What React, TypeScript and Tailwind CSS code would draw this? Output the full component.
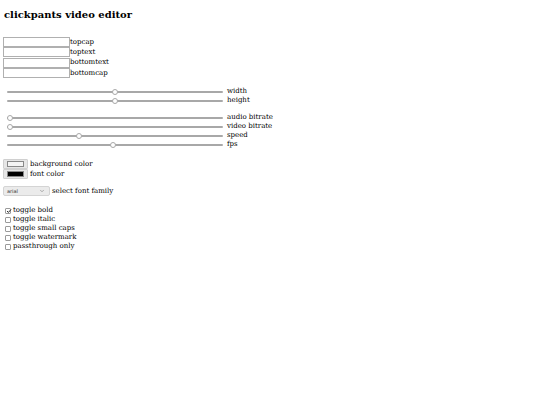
import { ChevronDown } from "lucide-react";

const textFields = ["topcap", "toptext", "bottomtext", "bottomcap"];

const sizeSliders = [
  { label: "width", value: 50 },
  { label: "height", value: 50 },
];

const mediaSliders = [
  { label: "audio bitrate", value: 0 },
  { label: "video bitrate", value: 0 },
  { label: "speed", value: 33 },
  { label: "fps", value: 49 },
];

const toggles = [
  { label: "toggle bold", checked: true },
  { label: "toggle italic", checked: false },
  { label: "toggle small caps", checked: false },
  { label: "toggle watermark", checked: false },
  { label: "passthrough only", checked: false },
];

function Slider({ label, value }: { label: string; value: number }) {
  return (
    <div className="flex h-[9px] items-center">
      <div className="relative ml-[7px] h-[9px] w-[216px]">
        <div className="absolute left-0 right-0 top-[3.5px] h-[2px] rounded-full bg-[#a8a8a8]" />
        <div
          className="absolute top-[1.5px] h-[6px] w-[6px] rounded-full border border-[#a8a8a8] bg-white"
          style={{ left: `calc(${value}% - ${(value / 100) * 6}px)` }}
        />
      </div>
      <span className="ml-[4px]">{label}</span>
    </div>
  );
}

function ColorRow({ label, swatch }: { label: string; swatch: string }) {
  return (
    <div className="flex h-[10px] items-center">
      <div className="ml-[3px] flex h-[10px] w-[25px] items-center justify-center rounded-[1px] border border-[#d0d0d0] bg-[#e6e6e6]">
        <div className={`h-[6px] w-[17px] border border-[#888] ${swatch}`} />
      </div>
      <span className="ml-[2px]">{label}</span>
    </div>
  );
}

export default function App() {
  return (
    <div className="min-h-[405px] w-[540px] bg-white text-[7px] leading-[9px] text-black font-['DejaVu_Serif',serif]">
      <h1 className="pl-[4px] pt-[8px] text-[10px] font-bold leading-[14px]">clickpants video editor</h1>

      <div className="mt-[15px] flex flex-col">
        {textFields.map((name) => (
          <div key={name} className="flex h-[10.3px] items-center">
            <input
              type="text"
              className="ml-[3px] h-[10px] w-[67px] border border-[#b0b0b0] bg-white outline-none"
            />
            <span>{name}</span>
          </div>
        ))}
      </div>

      <div className="mt-[9px] flex flex-col">
        {sizeSliders.map((s) => (
          <Slider key={s.label} {...s} />
        ))}
      </div>

      <div className="mt-[8px] flex flex-col">
        {mediaSliders.map((s) => (
          <Slider key={s.label} {...s} />
        ))}
      </div>

      <div className="mt-[10px] flex flex-col">
        <ColorRow label="background color" swatch="bg-[#f4f4f4]" />
        <ColorRow label="font color" swatch="bg-black" />
      </div>

      <div className="mt-[7px] flex h-[10px] items-center">
        <div className="ml-[3px] flex h-[10px] w-[47px] items-center justify-between rounded-[2px] border border-[#d4d4d4] bg-[#ebebeb] pl-[3px] pr-[4px] text-[5px] text-[#333] font-['DejaVu_Sans',sans-serif]">
          <span>arial</span>
          <ChevronDown size={6} strokeWidth={2} className="text-[#666]" />
        </div>
        <span className="ml-[2px]">select font family</span>
      </div>

      <div className="mt-[10px] flex flex-col">
        {toggles.map((t) => (
          <div key={t.label} className="flex h-[9px] items-center">
            <div className="relative ml-[5px] h-[6px] w-[6px] rounded-[1px] border-[0.5px] border-[#9a9a9a] bg-white">
              {t.checked && (
                <svg viewBox="0 0 10 10" className="absolute -left-[0.5px] -top-[0.5px] h-[6px] w-[6px]">
                  <path d="M1.8 5 L4 7.4 L8.4 2.4" fill="none" stroke="#222" strokeWidth="1.6" />
                </svg>
              )}
            </div>
            <span className="ml-[2px]">{t.label}</span>
          </div>
        ))}
      </div>
    </div>
  );
}
